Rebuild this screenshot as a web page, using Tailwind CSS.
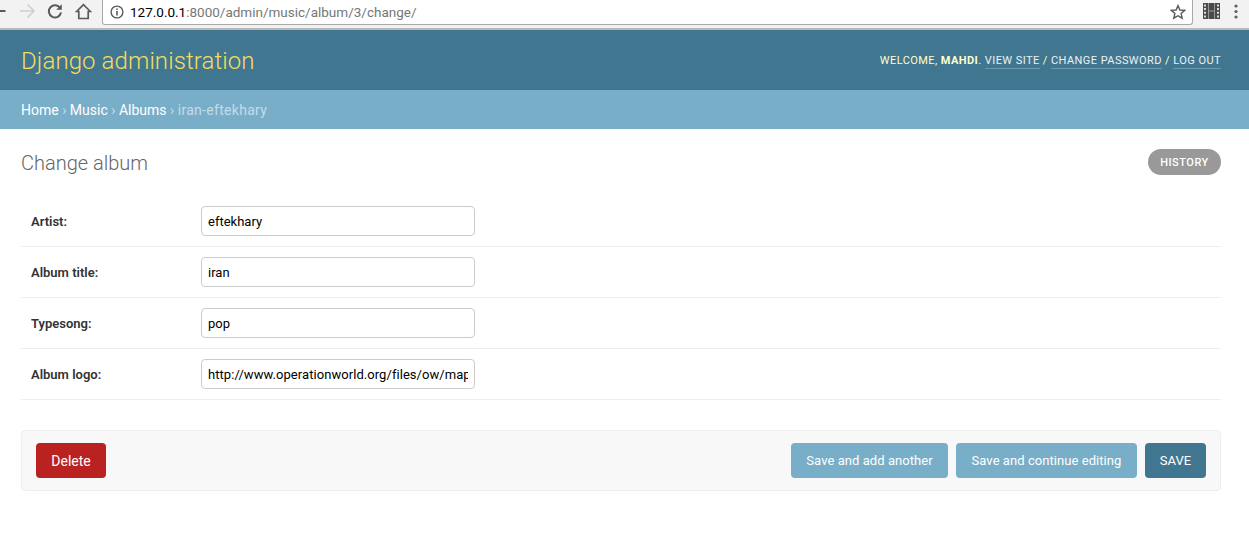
<!DOCTYPE html>
<html lang="en">
<head>
    <meta charset="UTF-8">
    <meta name="viewport" content="width=device-width, initial-scale=1.0">
    <script src="https://cdn.jsdelivr.net/npm/@tailwindcss/browser@4"></script>
    <title>Change album | Django site admin</title>
</head>
<body class="bg-white font-['Roboto',sans-serif] text-[#333] overflow-hidden">
    <!-- browser toolbar -->
    <div class="h-[30px] bg-[#f2f2f2] border-b-2 border-[#b9b9b9] flex items-start">
        <div class="w-[102px] h-[24px] flex items-center shrink-0 relative">
            <svg class="absolute left-0 top-[3px]" width="8" height="16" viewBox="0 0 8 16"><path d="M-4 7h9.5v2H-4z" fill="#5a5a5a"/></svg>
            <svg class="absolute left-[20px] top-[3px]" width="16" height="16" viewBox="0 0 16 16"><path d="M0 7.2h12.2L7 2l1.1-1.1L15.2 8l-7.1 7.1L7 14l5.2-5.2H0z" fill="#d0d0d0"/></svg>
            <svg class="absolute left-[47px] top-[3px]" width="16" height="16" viewBox="0 0 16 16"><path d="M13.2 5.2A6.1 6.1 0 1 0 14 9.4" fill="none" stroke="#5a5a5a" stroke-width="2"/><path d="M14.8 1.2v5.6H9.2z" fill="#5a5a5a"/></svg>
            <svg class="absolute left-[75px] top-[3px]" width="17" height="17" viewBox="0 0 17 17"><path d="M8.5 1.6 1.6 8.5h2.2v7h9.4v-7h2.2z" fill="none" stroke="#5a5a5a" stroke-width="1.7" stroke-linejoin="miter"/></svg>
        </div>
        <div class="w-[1091px] h-[25px] bg-white border-l border-r border-b border-[#a9a9a9] rounded-br-[3px] rounded-bl-[3px] flex items-center shrink-0 pl-[7px] pr-[6px]">
            <svg width="14" height="14" viewBox="0 0 14 14" class="shrink-0"><circle cx="7" cy="7" r="5.9" fill="none" stroke="#5a5a5a" stroke-width="1.4"/><path d="M6.2 6h1.6v4.4H6.2zM6.2 3.4h1.6v1.5H6.2z" fill="#5a5a5a"/></svg>
            <span class="ml-[6px] text-[13.5px] text-[#777] leading-[22px]"><span class="text-black">127.0.0.1</span>:8000/admin/music/album/3/change/</span>
            <svg class="ml-auto" width="16" height="16" viewBox="0 0 16 16"><path d="M8 1.6l1.9 4.4 4.8.4-3.6 3.1 1.1 4.7L8 11.7l-4.2 2.5 1.1-4.7-3.6-3.1 4.8-.4z" fill="none" stroke="#5a5a5a" stroke-width="1.4"/></svg>
        </div>
        <svg class="ml-[10px] mt-[3px] shrink-0" width="17" height="16" viewBox="0 0 17 16"><rect width="17" height="16" fill="#4a4a4a"/><path d="M1 1.5h2v2H1zM1 5h2v2H1zM1 8.7h2v2H1zM1 12.4h2v2H1zM14 1.5h2v2h-2zM14 5h2v2h-2zM14 8.7h2v2h-2zM14 12.4h2v2h-2z" fill="#ddd"/><path d="M5 0h1v16H5zM11 0h1v16h-1zM6 7.5h5v1H6z" fill="#999"/></svg>
        <svg class="ml-[14px] mt-[4px] shrink-0" width="4" height="15" viewBox="0 0 4 15"><circle cx="2" cy="2" r="1.6" fill="#5f5f5f"/><circle cx="2" cy="7.5" r="1.6" fill="#5f5f5f"/><circle cx="2" cy="13" r="1.6" fill="#5f5f5f"/></svg>
    </div>

    <!-- header -->
    <div class="h-[60px] bg-[#417690] flex items-center justify-between pl-[21px] pr-[28px]">
        <div class="text-[24px] font-light text-[#f5dd5d] leading-none tracking-[0.1px] mt-[1px]">Django administration</div>
        <div class="text-[11px] tracking-[0.44px] uppercase text-[#ffc] flex items-center mt-[3px]">
            <span class="whitespace-pre">Welcome, <strong class="font-bold">Mahdi</strong>. </span>
            <a class="text-white/90 border-b border-white/25 leading-[14px]" href="#">View site</a>
            <span class="whitespace-pre"> / </span>
            <a class="text-white/90 border-b border-white/25 leading-[14px]" href="#">Change password</a>
            <span class="whitespace-pre"> / </span>
            <a class="text-white/90 border-b border-white/25 leading-[14px]" href="#">Log out</a>
        </div>
    </div>

    <!-- breadcrumbs -->
    <div class="h-[39px] bg-[#79aec8] pl-[21px] text-[14px] leading-[40px] text-[#c4dce8] whitespace-pre"><a class="text-white" href="#">Home</a> › <a class="text-white" href="#">Music</a> › <a class="text-white" href="#">Albums</a> › <span class="tracking-[0.3px]">iran-eftekhary</span></div>

    <!-- content -->
    <div class="pl-[21px] pr-[28px] pt-[20px]">
        <div class="flex items-start justify-between h-[47px]">
            <h1 class="text-[20px] font-light text-[#666] leading-[28px]">Change album</h1>
            <a href="#" class="h-[26px] w-[73px] pt-[2px] rounded-[13px] bg-[#999] text-white text-[11px] font-medium tracking-[0.5px] uppercase flex items-center justify-center">History</a>
        </div>

        <form>
            <div class="flex items-center h-[51px] border-b border-[#eee] pl-[10px]">
                <label class="w-[170px] pt-[2px] text-[13px] font-semibold text-[#333]">Artist:</label>
                <input type="text" value="eftekhary" class="w-[274px] h-[30px] border border-[#ccc] rounded-[4px] px-[6px] text-[13px] text-black">
            </div>
            <div class="flex items-center h-[51px] border-b border-[#eee] pl-[10px]">
                <label class="w-[170px] pt-[2px] text-[13px] font-semibold text-[#333]">Album title:</label>
                <input type="text" value="iran" class="w-[274px] h-[30px] border border-[#ccc] rounded-[4px] px-[6px] text-[13px] text-black">
            </div>
            <div class="flex items-center h-[51px] border-b border-[#eee] pl-[10px]">
                <label class="w-[170px] pt-[2px] text-[13px] font-semibold text-[#333]">Typesong:</label>
                <input type="text" value="pop" class="w-[274px] h-[30px] border border-[#ccc] rounded-[4px] px-[6px] text-[13px] text-black">
            </div>
            <div class="flex items-center h-[51px] border-b border-[#eee] pl-[10px]">
                <label class="w-[170px] pt-[2px] text-[13px] font-semibold text-[#333]">Album logo:</label>
                <input type="text" value="http://www.operationworld.org/files/ow/maps/lgmap/iran-MMAP-md.png" class="w-[274px] h-[30px] border border-[#ccc] rounded-[4px] px-[6px] text-[13px] tracking-[0.06px] text-black">
            </div>

            <div class="mt-[30px] h-[61px] bg-[#f8f8f8] border border-[#eee] rounded-[4px] flex items-center px-[14px]">
                <a href="#" class="h-[35px] w-[70px] pt-[1px] bg-[#ba2121] rounded-[4px] text-white text-[14px] flex items-center justify-center">Delete</a>
                <div class="ml-auto flex gap-[8px]">
                    <button type="button" class="h-[35px] w-[157px] bg-[#79aec8] rounded-[4px] text-white text-[13px] tracking-[0.06px]">Save and add another</button>
                    <button type="button" class="h-[35px] w-[181px] bg-[#79aec8] rounded-[4px] text-white text-[13px] tracking-[0.06px]">Save and continue editing</button>
                    <button type="button" class="h-[35px] w-[61px] bg-[#417690] rounded-[4px] text-white text-[13px] uppercase">Save</button>
                </div>
            </div>
        </form>
    </div>
</body>
</html>
